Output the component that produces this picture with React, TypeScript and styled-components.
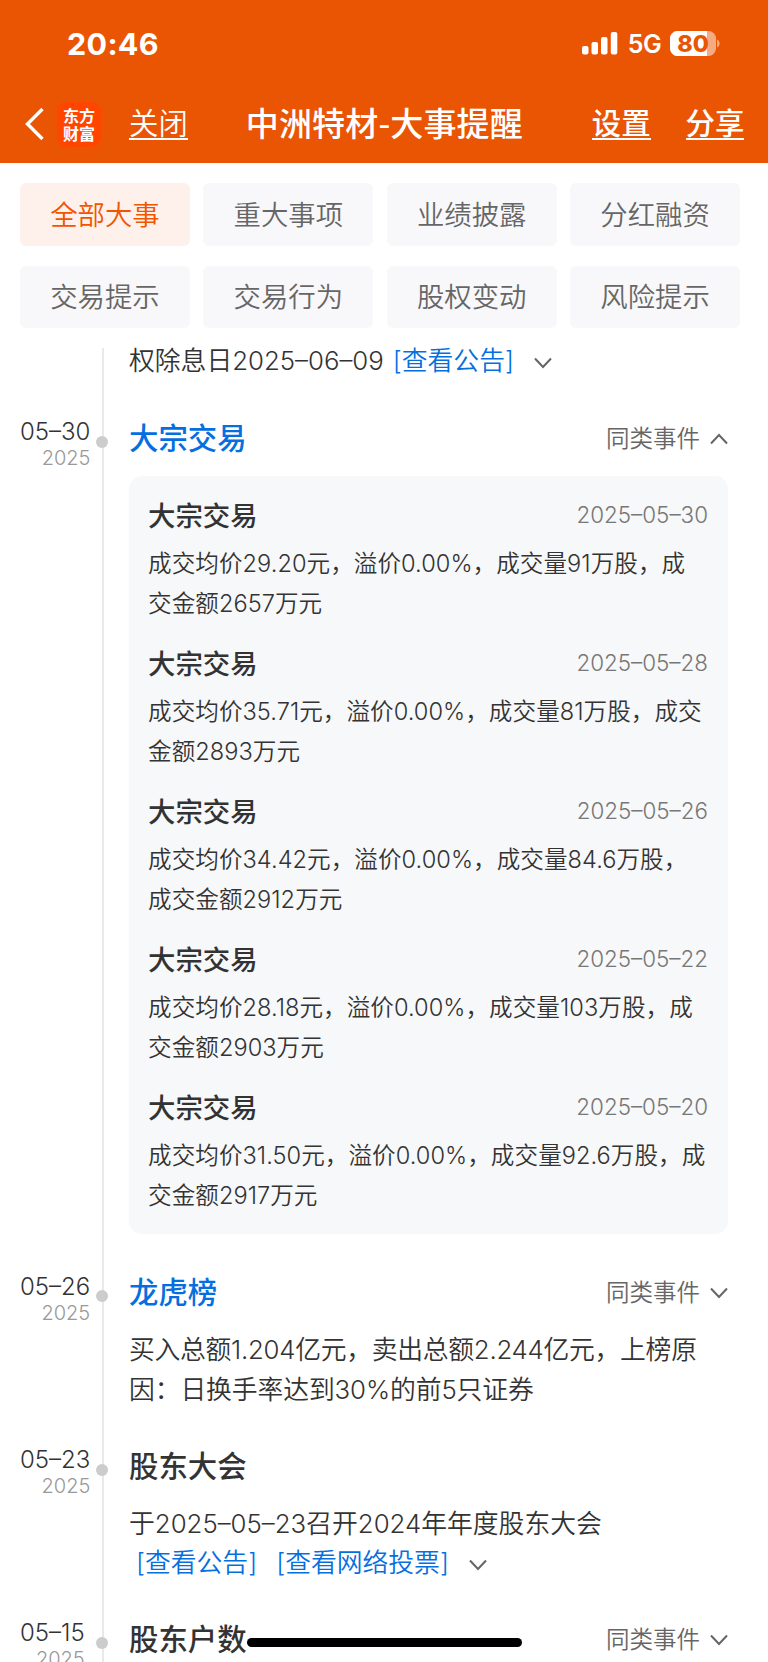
import React from "react";
import styled, { createGlobalStyle } from "styled-components";

const GlobalStyle = createGlobalStyle`
  * { box-sizing: border-box; }
  html, body { margin: 0; padding: 0; background: #fff; overflow: hidden; }
  body { font-family: Inter, "Noto Sans CJK SC", sans-serif; color: #333; }
`;

const Screen = styled.div`
  position: relative;
  width: 768px;
  height: 1662px;
  overflow: hidden;
  background: #fff;
`;

const Header = styled.header`
  height: 163px;
  background: #ea5504;
  color: #fff;
`;

const StatusBar = styled.div`
  display: flex;
  justify-content: space-between;
  align-items: center;
  height: 87px;
  padding: 0 48px 0 67px;
`;

const Clock = styled.span`
  font-size: 30.5px;
  font-weight: 700;
  line-height: 36px;
  letter-spacing: 0.3px;
`;

const StatusIcons = styled.div`
  display: flex;
  align-items: center;
`;

const Network = styled.span`
  margin: 1px 8.5px 0 10px;
  font-size: 25px;
  font-weight: 600;
  line-height: 30px;
  letter-spacing: -0.3px;
`;

const NavBar = styled.nav`
  display: flex;
  align-items: center;
  height: 76px;
  padding: 0 0 2px 25px;
  font-family: "Noto Sans CJK SC", sans-serif;
`;

const AppLogo = styled.div`
  display: flex;
  flex-direction: column;
  justify-content: center;
  align-items: center;
  width: 44px;
  height: 45px;
  margin: 0 28px 0 13px;
  border-radius: 9px;
  background: #ff4600;
  font-size: 16px;
  font-weight: 700;
  line-height: 18.5px;
`;

const NavLink = styled.span<{ $bold?: boolean; $gap?: number }>`
  margin-left: ${(p) => p.$gap ?? 0}px;
  height: 32px;
  border-bottom: 2px solid #fff;
  font-size: 29.4px;
  font-weight: ${(p) => (p.$bold ? 500 : 350)};
  line-height: 27px;
  white-space: nowrap;
`;

const PageTitle = styled.h1`
  margin: -5px 0 0 58px;
  width: 275px;
  font-size: 33px;
  font-weight: 500;
  line-height: 44px;
  letter-spacing: 0.15px;
  white-space: nowrap;
`;

const Filters = styled.div`
  display: grid;
  grid-template-columns: repeat(4, 1fr);
  grid-auto-rows: 62.5px;
  gap: 20px 13.5px;
  padding: 20px 28px 0 20px;
`;

const Filter = styled.div<{ $active?: boolean }>`
  display: flex;
  justify-content: center;
  align-items: center;
  padding-top: 1px;
  border-radius: 6px;
  background: ${(p) => (p.$active ? "#fef1eb" : "#f8f8fb")};
  color: ${(p) => (p.$active ? "#f25500" : "#666")};
  font-size: 27.4px;
  font-weight: 350;
  line-height: 40px;
`;

const Timeline = styled.main`
  position: relative;
  margin-top: 20px;
  &::before {
    content: "";
    position: absolute;
    left: 102px;
    top: 0;
    width: 1.5px;
    height: 1400px;
    background: #e9e9e9;
  }
`;

const Event = styled.section`
  position: relative;
  display: grid;
  grid-template-columns: 109px 599px;
  padding: 0 0 36.5px 20px;
`;

const DateBlock = styled.div`
  justify-self: start;
  text-align: right;
`;

const Day = styled.div`
  padding-top: 1px;
  font-size: 24px;
  font-weight: 350;
  line-height: 26px;
  color: #333;
`;

const Year = styled.div`
  font-size: 20px;
  font-weight: 350;
  line-height: 26px;
  color: #999;
`;

const Dot = styled.i`
  position: absolute;
  left: 96px;
  top: 17.5px;
  width: 12px;
  height: 12px;
  border-radius: 50%;
  background: #ccc;
`;

const EventHead = styled.div`
  display: flex;
  justify-content: space-between;
  align-items: center;
  height: 40px;
  padding-top: 1px;
`;

const EventTitle = styled.h2<{ $link?: boolean }>`
  margin: 0;
  font-size: 29.4px;
  font-weight: 500;
  line-height: 40px;
  color: ${(p) => (p.$link ? "#066fe0" : "#333")};
`;

const Similar = styled.div`
  display: flex;
  align-items: center;
  gap: 10px;
  font-size: 23.5px;
  font-weight: 350;
  line-height: 36px;
  color: #666;
`;

const Body = styled.div<{ $first?: boolean }>`
  margin: ${(p) => (p.$first ? "-7px 0 1.4px" : "17.7px 0 0")};
  font-size: 25.8px;
  font-weight: 350;
  line-height: 39.6px;
  white-space: nowrap;
`;

const Line = styled.div<{ $tracking?: number }>`
  display: flex;
  align-items: center;
  height: 39.6px;
  letter-spacing: ${(p) => p.$tracking ?? 0}px;
`;

const Notice = styled.span<{ $gap: number }>`
  margin-left: ${(p) => p.$gap}px;
  color: #066fe0;
`;

const Toggle = styled.span`
  display: flex;
  margin: 4px 0 0 20px;
`;

const Card = styled.div`
  display: flex;
  flex-direction: column;
  gap: 20.8px;
  height: 758px;
  margin: 17.7px 0 2px;
  padding: 20px 20px 0 19px;
  border-radius: 13px;
  background: #f7f8fa;
`;

const TradeHead = styled.div`
  display: flex;
  justify-content: space-between;
  align-items: center;
  height: 40px;
  margin-bottom: 8px;
`;

const TradeTitle = styled.h3`
  margin: 0;
  font-size: 27.4px;
  font-weight: 500;
  line-height: 40px;
`;

const TradeDate = styled.span`
  margin-top: -3px;
  font-size: 22.4px;
  font-weight: 350;
  color: #777;
`;

const TradeText = styled.div`
  font-size: 23.6px;
  font-weight: 350;
  line-height: 39.6px;
  letter-spacing: 0.04px;
  white-space: nowrap;
`;

const HomeIndicator = styled.div`
  position: absolute;
  left: 247px;
  top: 1638px;
  width: 275px;
  height: 9px;
  border-radius: 5px;
  background: #000;
`;

const Chevron = ({ up = false }: { up?: boolean }) => (
  <svg width="18" height="12" viewBox="0 0 18 12" fill="none" stroke="#666" strokeWidth="2">
    <path d={up ? "M1 10.5 9 2l8 8.5" : "M1 1.5 9 10l8-8.5"} />
  </svg>
);

const SignalIcon = () => (
  <svg width="36" height="23" viewBox="0 0 36 23" fill="#fff">
    <rect x="0" y="14" width="6.500" height="8.500" rx="2" />
    <rect x="9.500" y="10" width="6.500" height="12.500" rx="2" />
    <rect x="19" y="5" width="6.500" height="17.500" rx="2" />
    <rect x="28.800" y="0" width="6.500" height="22.500" rx="2" />
  </svg>
);

const BatteryIcon = () => (
  <svg width="50" height="25" viewBox="0 0 50 25">
    <rect width="46" height="25" rx="7.500" fill="#f5aa82" />
    <path d="M7.500 0H37v25H7.500A7.500 7.500 0 0 1 0 17.500v-10A7.500 7.500 0 0 1 7.500 0Z" fill="#fff" />
    <path d="M47 8.500c3.400 1.200 3.400 6.800 0 8Z" fill="#f5aa82" />
    <text x="23" y="20.800" textAnchor="middle" fontFamily="Inter" fontSize="23.300" fontWeight="800" fill="#ea5504">80</text>
  </svg>
);

const filters = ["全部大事", "重大事项", "业绩披露", "分红融资", "交易提示", "交易行为", "股权变动", "风险提示"];

const trades = [
  { date: "2025–05–30", lines: ["成交均价29.20元，溢价0.00%，成交量91万股，成", "交金额2657万元"] },
  { date: "2025–05–28", lines: ["成交均价35.71元，溢价0.00%，成交量81万股，成交", "金额2893万元"] },
  { date: "2025–05–26", lines: ["成交均价34.42元，溢价0.00%，成交量84.6万股，", "成交金额2912万元"] },
  { date: "2025–05–22", lines: ["成交均价28.18元，溢价0.00%，成交量103万股，成", "交金额2903万元"] },
  { date: "2025–05–20", lines: ["成交均价31.50元，溢价0.00%，成交量92.6万股，成", "交金额2917万元"] },
];

type ItemProps = {
  day: string;
  title: string;
  link?: boolean;
  similar?: "up" | "down";
  children?: React.ReactNode;
};

const TimelineItem = ({ day, title, link, similar, children }: ItemProps) => (
  <Event>
    <DateBlock>
      <Day>{day}</Day>
      <Year>2025</Year>
    </DateBlock>
    <Dot />
    <div>
      <EventHead>
        <EventTitle $link={link}>{title}</EventTitle>
        {similar && (
          <Similar>
            同类事件
            <Chevron up={similar === "up"} />
          </Similar>
        )}
      </EventHead>
      {children}
    </div>
  </Event>
);

export default function App() {
  return (
    <Screen>
      <GlobalStyle />
      <Header>
        <StatusBar>
          <Clock>20:46</Clock>
          <StatusIcons>
            <SignalIcon />
            <Network>5G</Network>
            <BatteryIcon />
          </StatusIcons>
        </StatusBar>
        <NavBar>
          <svg width="19" height="32" viewBox="0 0 19 32" fill="none" stroke="#fff" strokeWidth="3.400">
            <path d="M17.500 1 2.500 16l15 15" />
          </svg>
          <AppLogo>
            <span>东方</span>
            <span>财富</span>
          </AppLogo>
          <NavLink>关闭</NavLink>
          <PageTitle>中洲特材-大事提醒</PageTitle>
          <NavLink $bold $gap={71}>设置</NavLink>
          <NavLink $bold $gap={35}>分享</NavLink>
        </NavBar>
      </Header>

      <Filters>
        {filters.map((name, i) => (
          <Filter key={name} $active={i === 0}>{name}</Filter>
        ))}
      </Filters>

      <Timeline>
        <Event>
          <span />
          <Body $first>
            <Line>
              权除息日2025–06–09
              <Notice $gap={9}>[查看公告]</Notice>
              <Toggle><Chevron /></Toggle>
            </Line>
          </Body>
        </Event>

        <TimelineItem day="05–30" title="大宗交易" link similar="up">
          <Card>
            {trades.map((t) => (
              <div key={t.date}>
                <TradeHead>
                  <TradeTitle>大宗交易</TradeTitle>
                  <TradeDate>{t.date}</TradeDate>
                </TradeHead>
                {t.lines.map((l) => (
                  <TradeText key={l}>{l}</TradeText>
                ))}
              </div>
            ))}
          </Card>
        </TimelineItem>

        <TimelineItem day="05–26" title="龙虎榜" link similar="down">
          <Body>
            <Line $tracking={-0.27}>买入总额1.204亿元，卖出总额2.244亿元，上榜原</Line>
            <Line $tracking={-0.1}>因：日换手率达到30%的前5只证券</Line>
          </Body>
        </TimelineItem>

        <TimelineItem day="05–23" title="股东大会">
          <Body>
            <Line>于2025–05–23召开2024年年度股东大会</Line>
            <Line>
              <Notice $gap={7}>[查看公告]</Notice>
              <Notice $gap={19}>[查看网络投票]</Notice>
              <Toggle><Chevron /></Toggle>
            </Line>
          </Body>
        </TimelineItem>

        <TimelineItem day="05–15" title="股东户数" similar="down" />
      </Timeline>
      <HomeIndicator />
    </Screen>
  );
}
